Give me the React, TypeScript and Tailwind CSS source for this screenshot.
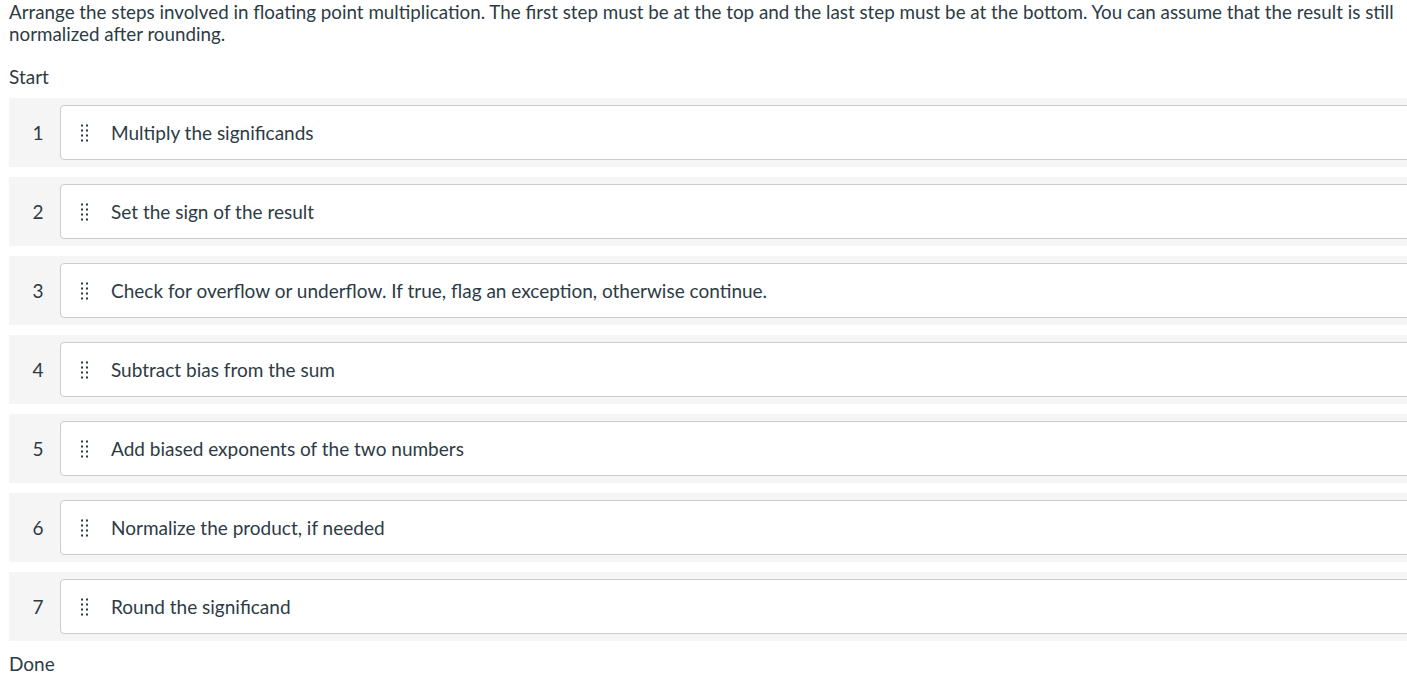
import React from "react";

const steps = [
  "Multiply the significands",
  "Set the sign of the result",
  "Check for overflow or underflow. If true, flag an exception, otherwise continue.",
  "Subtract bias from the sum",
  "Add biased exponents of the two numbers",
  "Normalize the product, if needed",
  "Round the significand",
];

function DragDots() {
  return (
    <svg width="9" height="20" viewBox="0 0 9 20" className="shrink-0" aria-hidden="true">
      {[0, 1, 2, 3].map((r) =>
        [0, 1].map((c) => (
          <rect key={`${r}-${c}`} x={1 + c * 5} y={1.5 + r * 5} width="2" height="2" fill="#2d3b45" />
        ))
      )}
    </svg>
  );
}

export default function App() {
  return (
    <div
      className="w-full overflow-hidden bg-white text-[#2d3b45] text-[19px] leading-[22px] pt-[1px] pb-4"
      style={{ fontFamily: "Lato, 'Noto Sans', sans-serif" }}
    >
      <div className="pl-[9px] text-[18.8px]">
        <span className="whitespace-nowrap">
          Arrange the steps involved in floating point multiplication. The first step must be at the top and the last
          step must be at the bottom. You can assume that the result is still
        </span>
        <br />
        normalized after rounding.
      </div>
      <div className="pl-[9px] mt-[21px]">Start</div>
      <div className="mt-[10px] ml-[9px] -mr-[20px] flex flex-col gap-[10px]">
        {steps.map((s, i) => (
          <div key={i} className="flex items-stretch bg-[#f5f5f5] h-[69px] pt-[7px] pb-[7px]">
            <div className="w-[51px] pl-[7px] flex items-center justify-center">{i + 1}</div>
            <div className="flex-1 flex items-center bg-white border border-[#c7cdd1] rounded-l-[4px] pl-[19px]">
              <DragDots />
              <span className="ml-[22px]">{s}</span>
            </div>
          </div>
        ))}
      </div>
      <div className="pl-[9px] mt-[12px]">Done</div>
    </div>
  );
}
